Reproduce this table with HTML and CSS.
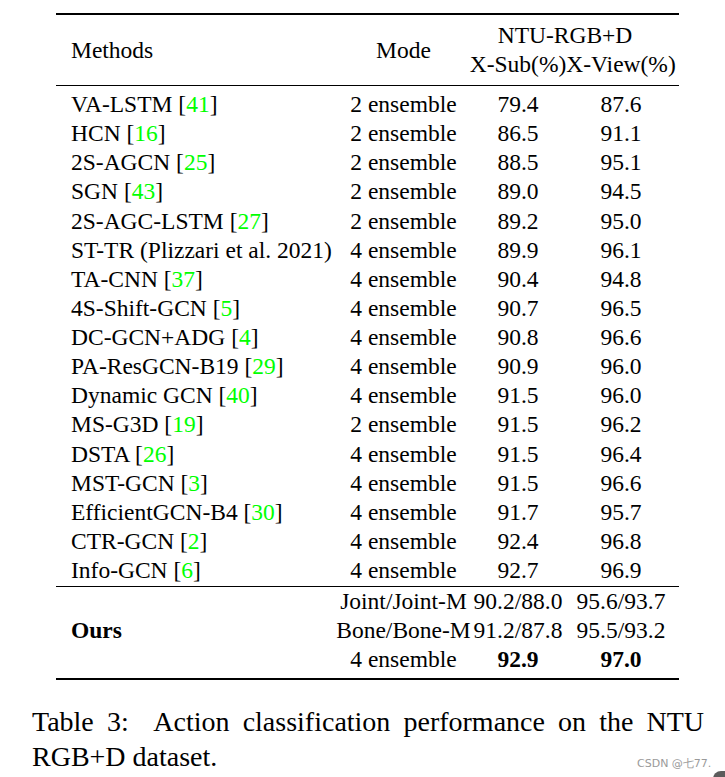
FILE: index.html
```html
<!DOCTYPE html>
<html>
<head>
<meta charset="utf-8">
<link rel="stylesheet" href="styles.css">
</head>
<body>
<div class="page">
  <div class="tbl">
    <div class="head">
      <div class="c1 span2">Methods</div>
      <div class="c2 span2 ctr">Mode</div>
      <div class="c34 ctr">NTU-RGB+D</div>
      <div class="c3 ctr">X-Sub(%)</div>
      <div class="c4 ctr">X-View(%)</div>
    </div>
    <div class="body">
      <div class="row"><div class="m">VA-LSTM [<span class="ref">41</span>]</div><div class="ctr">2 ensemble</div><div class="ctr">79.4</div><div class="ctr">87.6</div></div>
      <div class="row"><div class="m">HCN [<span class="ref">16</span>]</div><div class="ctr">2 ensemble</div><div class="ctr">86.5</div><div class="ctr">91.1</div></div>
      <div class="row"><div class="m">2S-AGCN [<span class="ref">25</span>]</div><div class="ctr">2 ensemble</div><div class="ctr">88.5</div><div class="ctr">95.1</div></div>
      <div class="row"><div class="m">SGN [<span class="ref">43</span>]</div><div class="ctr">2 ensemble</div><div class="ctr">89.0</div><div class="ctr">94.5</div></div>
      <div class="row"><div class="m">2S-AGC-LSTM [<span class="ref">27</span>]</div><div class="ctr">2 ensemble</div><div class="ctr">89.2</div><div class="ctr">95.0</div></div>
      <div class="row"><div class="m">ST-TR (Plizzari et al. 2021)</div><div class="ctr">4 ensemble</div><div class="ctr">89.9</div><div class="ctr">96.1</div></div>
      <div class="row"><div class="m">TA-CNN [<span class="ref">37</span>]</div><div class="ctr">4 ensemble</div><div class="ctr">90.4</div><div class="ctr">94.8</div></div>
      <div class="row"><div class="m">4S-Shift-GCN [<span class="ref">5</span>]</div><div class="ctr">4 ensemble</div><div class="ctr">90.7</div><div class="ctr">96.5</div></div>
      <div class="row"><div class="m">DC-GCN+ADG [<span class="ref">4</span>]</div><div class="ctr">4 ensemble</div><div class="ctr">90.8</div><div class="ctr">96.6</div></div>
      <div class="row"><div class="m">PA-ResGCN-B19 [<span class="ref">29</span>]</div><div class="ctr">4 ensemble</div><div class="ctr">90.9</div><div class="ctr">96.0</div></div>
      <div class="row"><div class="m">Dynamic GCN [<span class="ref">40</span>]</div><div class="ctr">4 ensemble</div><div class="ctr">91.5</div><div class="ctr">96.0</div></div>
      <div class="row"><div class="m">MS-G3D [<span class="ref">19</span>]</div><div class="ctr">2 ensemble</div><div class="ctr">91.5</div><div class="ctr">96.2</div></div>
      <div class="row"><div class="m">DSTA [<span class="ref">26</span>]</div><div class="ctr">4 ensemble</div><div class="ctr">91.5</div><div class="ctr">96.4</div></div>
      <div class="row"><div class="m">MST-GCN [<span class="ref">3</span>]</div><div class="ctr">4 ensemble</div><div class="ctr">91.5</div><div class="ctr">96.6</div></div>
      <div class="row"><div class="m">EfficientGCN-B4 [<span class="ref">30</span>]</div><div class="ctr">4 ensemble</div><div class="ctr">91.7</div><div class="ctr">95.7</div></div>
      <div class="row"><div class="m">CTR-GCN [<span class="ref">2</span>]</div><div class="ctr">4 ensemble</div><div class="ctr">92.4</div><div class="ctr">96.8</div></div>
      <div class="row"><div class="m">Info-GCN [<span class="ref">6</span>]</div><div class="ctr">4 ensemble</div><div class="ctr">92.7</div><div class="ctr">96.9</div></div>
    </div>
    <div class="ours">
      <div class="m ours-name">Ours</div>
      <div class="ctr">Joint/Joint-M</div><div class="ctr">90.2/88.0</div><div class="ctr">95.6/93.7</div>
      <div class="ctr">Bone/Bone-M</div><div class="ctr">91.2/87.8</div><div class="ctr">95.5/93.2</div>
      <div class="ctr">4 ensemble</div><div class="ctr b">92.9</div><div class="ctr b">97.0</div>
    </div>
  </div>
  <p class="caption">Table 3:&nbsp; Action classification performance on the NTU RGB+D dataset.</p>
  <div class="wm">CSDN @七77.</div>
  <div class="corner"></div>
</div>
</body>
</html>
```
FILE: styles.css
```css
html, body {
  margin: 0;
  padding: 0;
  background: #fff;
}
.page {
  position: relative;
  width: 725px;
  height: 777px;
  overflow: hidden;
  padding-top: 13px;
  box-sizing: border-box;
  font-family: "Liberation Serif", "Times New Roman", serif;
  color: #000;
  font-size: 23.5px;
}
.tbl {
  margin-left: 56px;
  width: 623px;
  border-top: 2px solid #000;
  border-bottom: 2px solid #000;
}
.head, .row, .ours {
  display: grid;
  grid-template-columns: 289px 117px 112px 94px 11px;
}
.head {
  grid-template-rows: 29px 29px;
  padding: 6px 0 6px;
  border-bottom: 1px solid #000;
  line-height: 29px;
}
.head .c1 { grid-column: 1; grid-row: 1 / 3; padding-left: 15px; align-self: center; }
.head .c2 { grid-column: 2; grid-row: 1 / 3; align-self: center; }
.head .c34 { grid-column: 3 / 5; grid-row: 1; }
.head .c3 { grid-column: 3; grid-row: 2; }
.head .c4 { grid-column: 4; grid-row: 2; }
.ctr {
  display: flex;
  justify-content: center;
  white-space: nowrap;
}
.body {
  padding: 4px 0 1px;
  border-bottom: 1px solid #000;
}
.row {
  height: 29.125px;
  line-height: 29.125px;
}
.m {
  padding-left: 15px;
  white-space: nowrap;
}
.ref { color: #00ff00; }
.ours {
  grid-template-rows: 29px 29px 29px;
  line-height: 29px;
  padding: 0 0 4px;
}
.ours .ours-name {
  grid-column: 1;
  grid-row: 1 / 4;
  align-self: center;
  font-weight: bold;
}
.ours > .ctr:nth-child(3n+2) { grid-column: 2; }
.b { font-weight: bold; }
.caption {
  margin: 24px 0 0 32px;
  width: 672px;
  font-size: 28px;
  line-height: 35px;
  text-align: justify;
  text-align-last: left;
}
.wm {
  position: absolute;
  left: 637px;
  top: 756px;
  font-family: "DejaVu Sans", sans-serif;
  font-size: 11px;
  color: #9a9a9a;
  white-space: nowrap;
}
.corner {
  position: absolute;
  left: 713px;
  top: 771px;
  width: 30px;
  height: 30px;
  border-radius: 8px;
  background: #5c5c5c;
}
```
